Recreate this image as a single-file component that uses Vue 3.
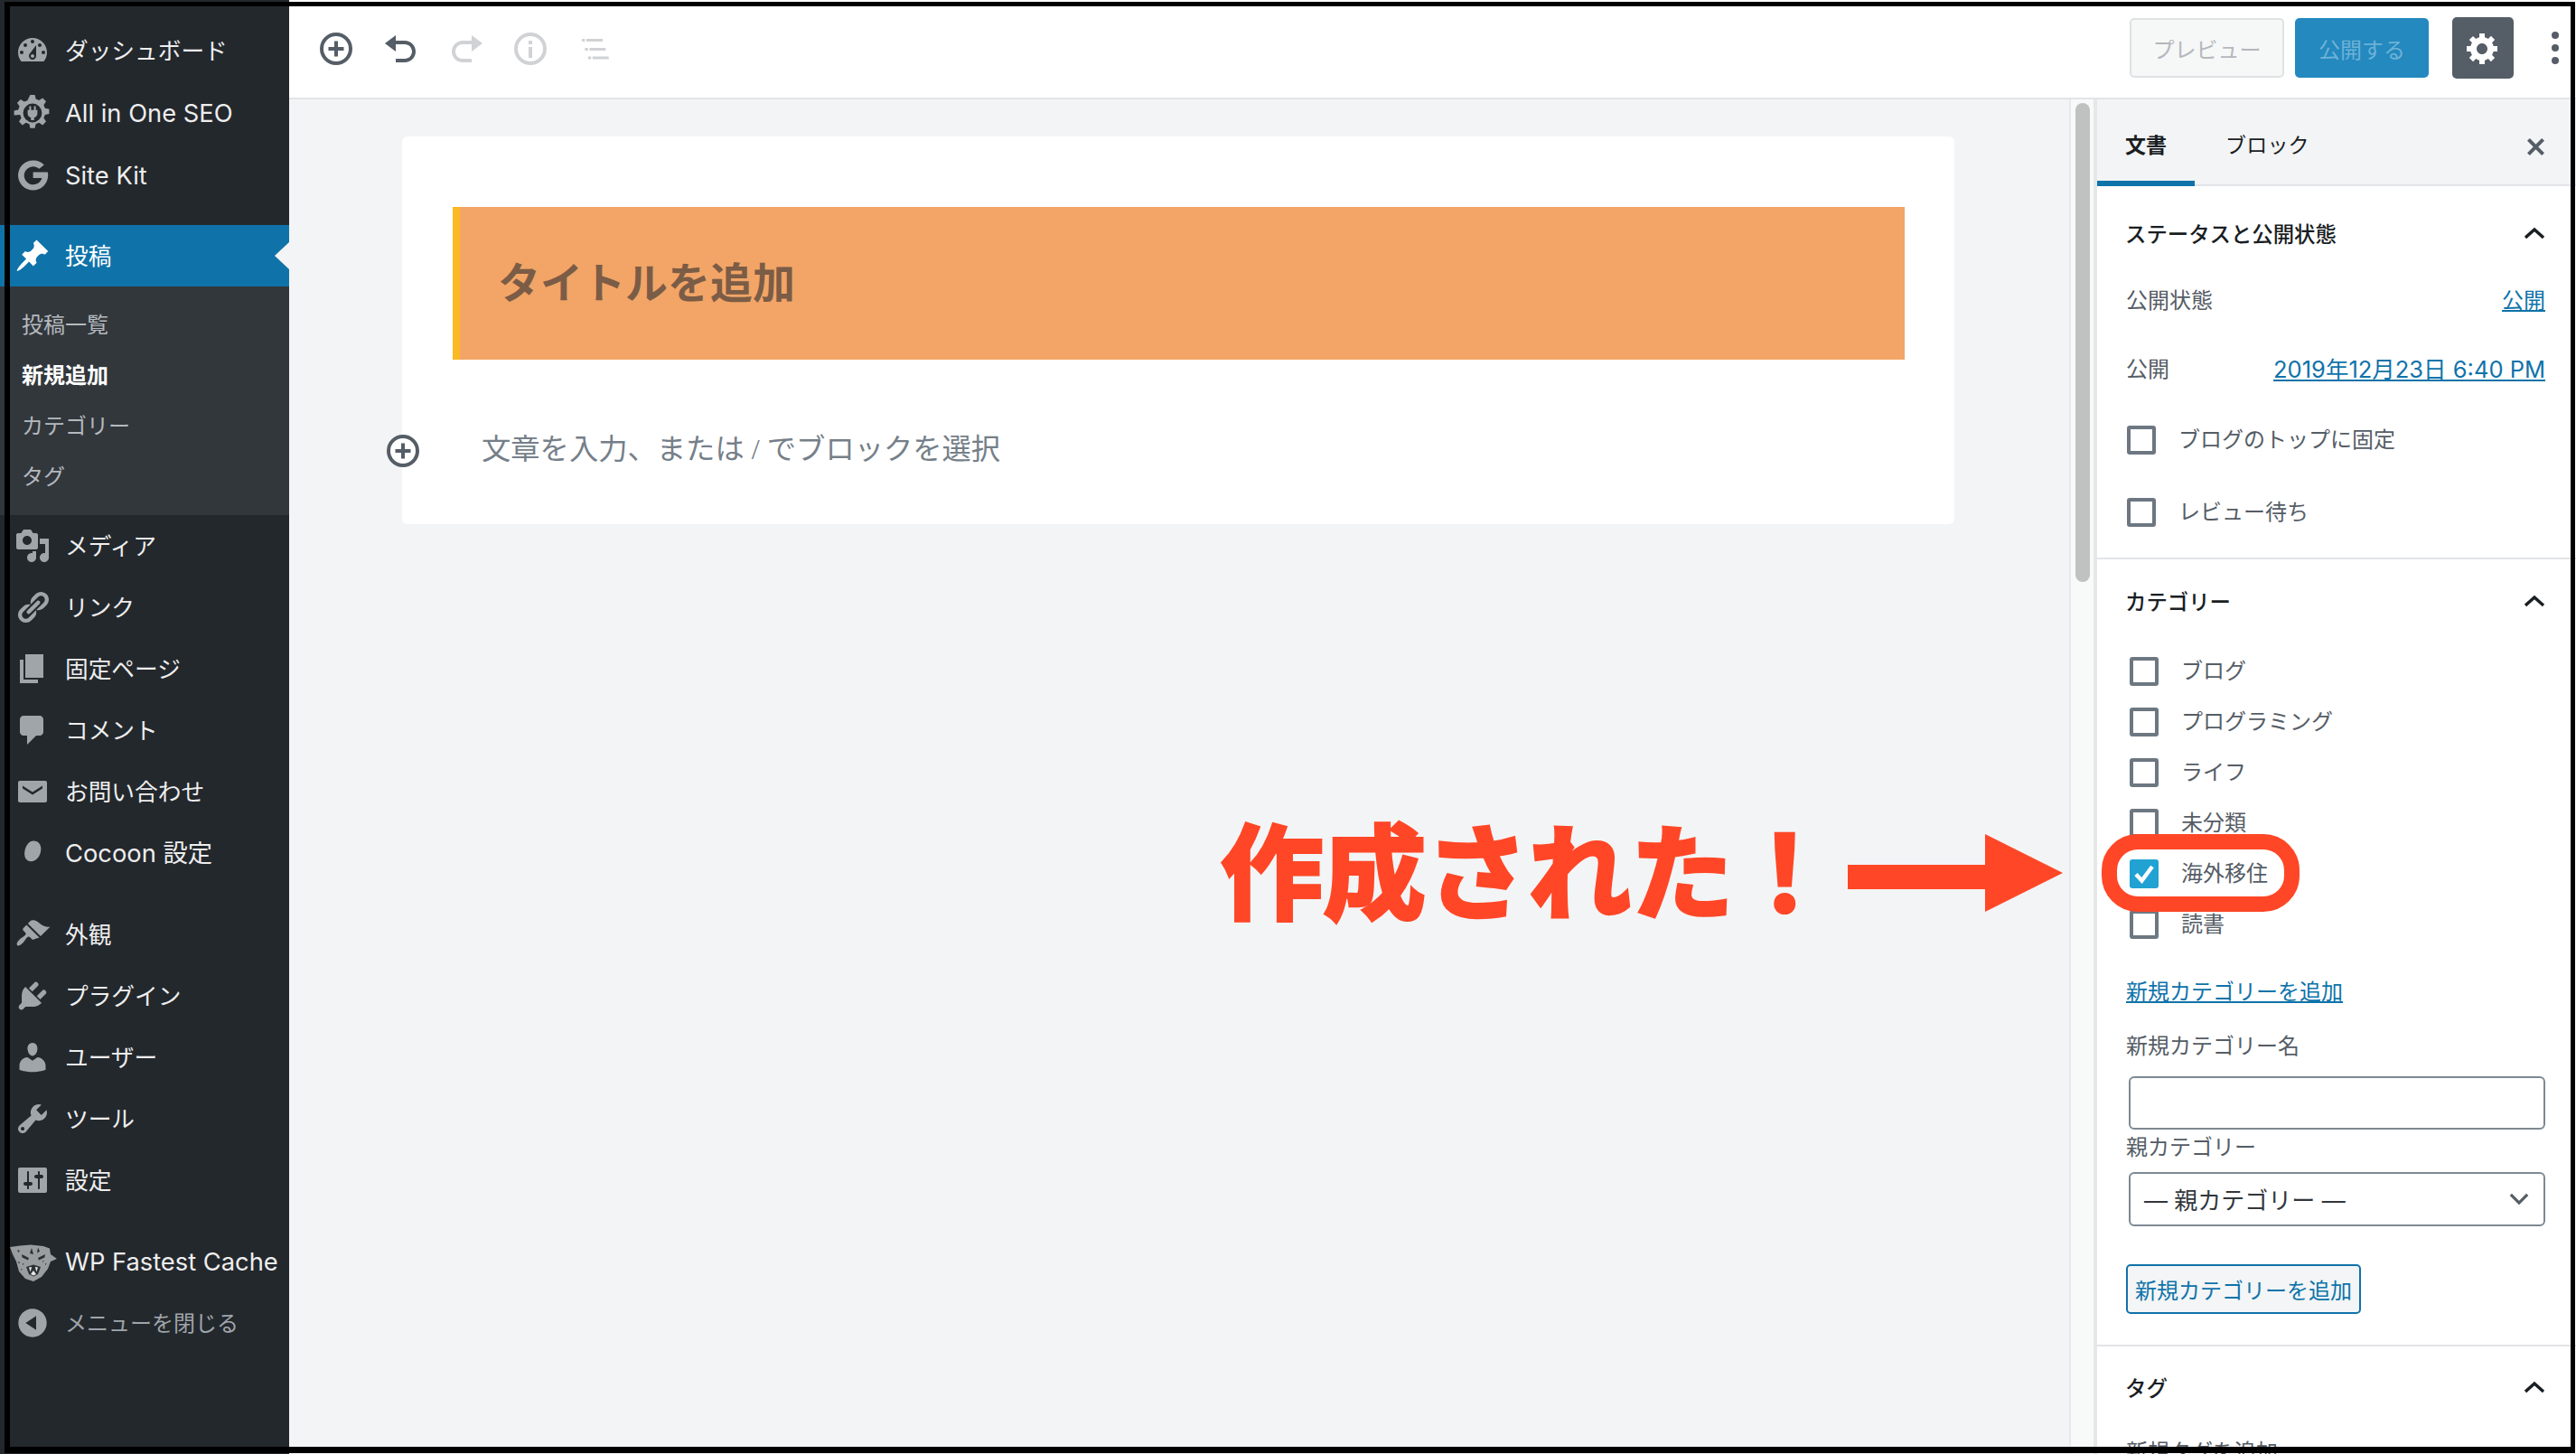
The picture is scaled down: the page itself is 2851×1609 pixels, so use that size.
<template>
  <div class="screen">
    <aside class="adminmenu">
      <template v-for="group in menuGroups" :key="group.id">
        <ul class="menu-group" :class="group.id">
          <li v-for="item in group.items" :key="item.label" class="menu-row" :class="{ current: item.current, muted: item.muted, latin: item.latin }">
            <svg class="menu-icon" viewBox="0 0 20 20">
              <path v-for="(p, i) in item.icon" :key="i" :d="p.d" :fill="p.fill || 'currentColor'" fill-rule="evenodd" />
            </svg>
            <span>{{ item.label }}</span>
            <i v-if="item.current" class="current-arrow"></i>
          </li>
          <li v-if="group.sub" class="submenu">
            <a v-for="s in group.sub" :key="s.label" :class="{ on: s.on }">{{ s.label }}</a>
          </li>
        </ul>
      </template>
    </aside>

    <div class="workspace">
      <header class="topbar">
        <div class="tools">
          <svg class="tool add" viewBox="0 0 36 36"><circle cx="18" cy="18" r="16" /><path d="M18 9.5v17M9.5 18h17" /></svg>
          <svg class="tool-solid undo" viewBox="0 0 20 20"><path :d="undoPath" /></svg>
          <svg class="tool-solid redo" viewBox="0 0 20 20"><path :d="undoPath" /></svg>
          <svg class="tool info" viewBox="0 0 36 36"><circle cx="18" cy="18" r="16" /><path d="M18 16v12" /><path d="M18 9v4" /></svg>
          <svg class="outline" viewBox="0 0 30 24">
            <path d="M0 1h3.4v3H0zM5 1h18v3H5zM3.4 11h3.4v3H3.4zM8.4 11h18v3h-18zM6.8 20.500h3.400v3H6.800zM11.800 20.500h18v3h-18z" />
          </svg>
        </div>
        <div class="actions">
          <button class="btn-preview">プレビュー</button>
          <button class="btn-publish">公開する</button>
          <button class="btn-settings">
            <svg viewBox="0 0 20 20"><path :d="gearPath" fill="#fff" fill-rule="evenodd" /></svg>
          </button>
          <span class="kebab"><i></i><i></i><i></i></span>
        </div>
      </header>

      <div class="body-row">
        <main class="editor">
          <section class="card">
            <div class="post-title">タイトルを追加</div>
            <div class="post-body">
              <svg class="inline-add" viewBox="0 0 36 36"><circle cx="18" cy="18" r="16" /><path d="M18 9.500v17M9.500 18h17" /></svg>
              <span>文章を入力、または / でブロックを選択</span>
            </div>
          </section>
        </main>

        <div class="scroll-track"><div class="scroll-thumb"></div></div>

        <aside class="panel">
          <div class="tabs">
            <span class="tab active">文書</span>
            <span class="tab">ブロック</span>
            <svg class="close" viewBox="0 0 20 20"><path d="M3 3l14 14M17 3L3 17" /></svg>
          </div>

          <section class="group status">
            <div class="group-head">
              <h2>ステータスと公開状態</h2>
              <svg class="chev" viewBox="0 0 24 14"><path d="M2 12L12 3l10 9" /></svg>
            </div>
            <div class="kv first"><span>公開状態</span><a>公開</a></div>
            <div class="kv second"><span>公開</span><a>2019年12月23日 6:40 PM</a></div>
            <label class="check pin"><i class="box"></i>ブログのトップに固定</label>
            <label class="check pending"><i class="box"></i>レビュー待ち</label>
          </section>

          <section class="group cats">
            <div class="group-head">
              <h2>カテゴリー</h2>
              <svg class="chev" viewBox="0 0 24 14"><path d="M2 12L12 3l10 9" /></svg>
            </div>
            <ul class="cat-list">
              <li v-for="c in categories" :key="c.name" class="check">
                <i class="box" :class="{ checked: c.checked }">
                  <svg v-if="c.checked" viewBox="0 0 32 32"><path d="M7 16.500l6.500 7L25 8" /></svg>
                </i>{{ c.name }}
              </li>
            </ul>
            <a class="new-cat">新規カテゴリーを追加</a>
            <div class="field-label name-label">新規カテゴリー名</div>
            <div class="input"></div>
            <div class="field-label parent-label">親カテゴリー</div>
            <div class="select">
              <span>— 親カテゴリー —</span>
              <svg viewBox="0 0 24 14"><path d="M2 2l10 10L22 2" /></svg>
            </div>
            <button class="btn-add">新規カテゴリーを追加</button>
          </section>

          <section class="tags">
            <div class="group-head">
              <h2>タグ</h2>
              <svg class="chev" viewBox="0 0 24 14"><path d="M2 12L12 3l10 9" /></svg>
            </div>
            <div class="field-label tag-label">新規タグを追加</div>
          </section>
        </aside>
      </div>
    </div>

    <!-- annotation pasted on top of the screenshot -->
    <div class="note">作成された！</div>
    <svg class="note-arrow" viewBox="0 0 238 86"><path d="M0 34h152V0l86 43-86 43V61H0z" /></svg>
    <div class="note-ring"></div>
    <div class="frame"></div>
  </div>
</template>

<script setup>
const gearPath = 'M18 12h-2.180c-.170.700-.440 1.350-.810 1.930l1.540 1.540-2.100 2.100-1.540-1.540c-.580.360-1.230.630-1.910.790V19H8v-2.180c-.680-.160-1.330-.430-1.910-.790l-1.540 1.540-2.120-2.120 1.540-1.540c-.360-.580-.630-1.230-.790-1.910H1V9.030h2.170c.160-.700.440-1.350.800-1.940L2.430 5.550l2.100-2.100 1.540 1.540c.580-.370 1.240-.640 1.930-.810V2h3v2.180c.680.160 1.330.430 1.910.790l1.540-1.540 2.120 2.120-1.540 1.540c.360.590.640 1.240.800 1.940H18V12zm-8.500 1.500c1.660 0 3-1.340 3-3s-1.340-3-3-3-3 1.340-3 3 1.340 3 3 3z'
const undoPath = 'M12 5H7V2L1 6.500 7 11V7h5c2.200 0 4 1.800 4 4s-1.800 4-4 4H7v2h5c3.310 0 6-2.690 6-6s-2.690-6-6-6z'

const icons = {
  dashboard: [{ d: 'M3.760 16h12.480c1.100-1.370 1.760-3.110 1.760-5 0-4.420-3.580-8-8-8s-8 3.580-8 8c0 1.890.660 3.630 1.760 5zM10 4c.550 0 1 .450 1 1s-.450 1-1 1-1-.450-1-1 .450-1 1-1zM6 6c.550 0 1 .450 1 1s-.450 1-1 1-1-.450-1-1 .450-1 1-1zm8 0c.550 0 1 .450 1 1s-.450 1-1 1-1-.450-1-1 .450-1 1-1zm-5.370 5.550L12 7v6c0 1.100-.900 2-2 2s-2-.900-2-2c0-.570.240-1.080.630-1.450zM4 10c.550 0 1 .450 1 1s-.450 1-1 1-1-.450-1-1 .450-1 1-1zm12 0c.550 0 1 .450 1 1s-.450 1-1 1-1-.450-1-1 .450-1 1-1zm-5 3c0-.550-.450-1-1-1s-1 .450-1 1 .450 1 1 1 1-.450 1-1z' }],
  seo: [
    { d: 'M8.700 0h2.600l.500 2.300 1.800.700 2-1.300 1.900 1.900-1.300 2 .700 1.800 2.300.500v2.600l-2.300.500-.700 1.800 1.300 2-1.900 1.900-2-1.300-1.800.700-.500 2.300H8.700l-.500-2.300-1.800-.700-2 1.300-1.900-1.900 1.300-2-.700-1.800L-.200 11.300V8.700L2.100 8.200l.700-1.800-1.300-2 1.900-1.900 2 1.300 1.800-.700z' },
    { d: 'M10 4.800a5.200 5.200 0 1 0 0 10.400 5.200 5.200 0 0 0 0-10.400z', fill: '#23282d' },
    { d: 'M8.200 6.200h1v2.200h1.600V6.200h1v2.200h.900v1.900c0 1.200-.700 2-1.800 2.300v1.400H9.100v-1.400c-1.100-.300-1.800-1.100-1.800-2.300V8.400h.900z' }
  ],
  sitekit: [{ d: 'M16.400 4.200A8.300 8.300 0 0 0 10.300 1.700 8.300 8.300 0 1 0 18.600 10c0-.600-.100-1.200-.200-1.800H10.300v3.300h4.900a5 5 0 1 1-1.500-5.100z' }],
  pin: [{ d: 'M10.440 3.020l1.820-1.820 6.360 6.350-1.830 1.820c-1.050-.680-2.480-.570-3.410.360l-.750.750c-.920.930-1.040 2.350-.350 3.410l-1.830 1.820-2.410-2.410-2.800 2.790c-.420.420-3.380 2.710-3.800 2.290s1.860-3.390 2.280-3.810l2.790-2.790L4.100 9.360l1.830-1.820c1.050.690 2.480.570 3.400-.360l.750-.750c.930-.920 1.050-2.350.360-3.410z' }],
  media: [{ d: 'M13 11V4c0-.550-.450-1-1-1h-1.670L9 1H5L3.670 3H2c-.550 0-1 .450-1 1v7c0 .550.450 1 1 1h10c.550 0 1-.450 1-1zM7 4.500c1.380 0 2.500 1.120 2.500 2.500S8.380 9.500 7 9.500 4.500 8.380 4.500 7 5.620 4.500 7 4.500zM14 6h5v10.500c0 1.380-1.120 2.500-2.500 2.500S14 17.880 14 16.500s1.120-2.500 2.500-2.500c.170 0 .340.020.500.050V9h-3V6zm-4 8.050V13h2v3.500c0 1.380-1.120 2.500-2.500 2.500S7 17.880 7 16.500 8.120 14 9.500 14c.170 0 .340.020.500.050z' }],
  links: [{ d: 'M17.740 2.760c1.680 1.690 1.680 4.410 0 6.100l-1.530 1.520c-1.120 1.120-2.700 1.470-4.140 1.090l2.620-2.610.760-.770.760-.760c.840-.840.840-2.200 0-3.040-.840-.850-2.200-.850-3.040 0l-.770.760-3.380 3.380c-.370-1.440-.020-3.020 1.100-4.140l1.520-1.530c1.690-1.680 4.420-1.680 6.100 0zM8.590 13.430l5.340-5.340c.420-.420.420-1.100 0-1.520-.440-.430-1.130-.390-1.530 0l-5.330 5.340c-.420.420-.420 1.100 0 1.520.440.430 1.130.390 1.520 0zm-.760 2.290l4.140-4.150c.380 1.440.030 3.020-1.090 4.140l-1.520 1.530c-1.690 1.680-4.410 1.680-6.100 0-1.680-1.680-1.680-4.420 0-6.100l1.530-1.520c1.120-1.120 2.700-1.470 4.140-1.100l-4.140 4.150c-.850.840-.850 2.200 0 3.050.840.840 2.200.840 3.040 0z' }],
  page: [{ d: 'M6 15V2h10v13H6zm-1 1h8v2H3V5h2v11z' }],
  comment: [{ d: 'M5 2h9c1.100 0 2 .900 2 2v7c0 1.100-.900 2-2 2h-2l-5 5v-5H5c-1.100 0-2-.900-2-2V4c0-1.100.900-2 2-2z' }],
  mail: [{ d: 'M3 4h14c.550 0 1 .450 1 1v10c0 .550-.450 1-1 1H3c-.550 0-1-.450-1-1V5c0-.550.450-1 1-1zm7 6.300L4.500 6.800v1.500l5.500 3.500 5.500-3.500V6.800z' }],
  cocoon: [{ d: 'M10.500 3.300c3 0 4.600 2.400 4.100 5.500-.500 3.400-2.700 5.800-5.400 5.800-2.500 0-3.900-2-3.600-4.800.300-3.500 2.300-6.500 4.900-6.500z' }],
  brush: [{ d: 'M14.480 11.060L7.410 3.990l1.500-1.500c.500-.560 2.300-.470 3.510.320 1.210.800 1.430 1.280 2.910 2.100 1.180.640 2.450 1.260 4.450.850zm-.710.710L6.700 4.700 4.930 6.470c-.390.390-.390 1.020 0 1.410l1.060 1.060c.390.390.390 1.030 0 1.420-.600.600-1.430 1.110-2.210 1.690-.350.260-.700.530-1.010.840-1.430 1.430-1.800 2.500-1.230 3.070s1.640.200 3.070-1.230c.310-.310.580-.660.840-1.010.580-.780 1.090-1.610 1.690-2.210.390-.390 1.030-.390 1.420 0l1.060 1.060c.390.390 1.020.390 1.410 0z' }],
  plugin: [{ d: 'M13.110 4.360L9.870 7.600 8 5.730l3.240-3.240c.350-.340 1.050-.200 1.560.320.520.510.660 1.210.310 1.550zm-8 1.770l.910-1.120 9.010 9.010-1.190.840c-.710.710-2.630 1.160-3.820 1.160H6.140L4.900 17.260c-.590.590-1.540.590-2.120 0-.590-.580-.590-1.530 0-2.120l1.240-1.240v-3.880c0-1.130.400-3.190 1.090-3.890zm7.260 3.970l3.240-3.240c.340-.350 1.040-.210 1.550.310.520.510.660 1.210.310 1.550l-3.240 3.250z' }],
  user: [{ d: 'M10 9.250c-2.270 0-2.730-3.440-2.730-3.440C7 4.020 7.820 2 9.970 2c2.160 0 2.980 2.020 2.710 3.810 0 0-.410 3.440-2.680 3.440zm0 2.570L12.720 10c2.390 0 4.520 2.330 4.520 4.530v2.490s-3.650 1.130-7.240 1.130c-3.650 0-7.240-1.130-7.240-1.130v-2.490c0-2.250 1.940-4.480 4.470-4.480z' }],
  tools: [{ d: 'M16.680 9.770c-1.340 1.340-3.300 1.670-4.950.990l-5.410 6.520c-.990.990-2.590.990-3.580 0s-.990-2.590 0-3.570l6.520-5.420c-.680-1.650-.350-3.610.990-4.950 1.280-1.280 3.120-1.620 4.720-1.060l-2.890 2.890 2.820 2.820 2.860-2.870c.530 1.580.180 3.390-1.080 4.650zM3.810 16.210c.400.390 1.040.390 1.430 0 .400-.400.400-1.040 0-1.430-.390-.400-1.030-.400-1.430 0-.390.390-.390 1.030 0 1.430z' }],
  settings: [{ d: 'M18 16V4c0-.550-.450-1-1-1H3c-.550 0-1 .450-1 1v12c0 .550.450 1 1 1h14c.550 0 1-.450 1-1zM8 11h1c.550 0 1 .450 1 1s-.450 1-1 1H8v1.500c0 .280-.220.500-.500.500s-.500-.220-.500-.500V13H6c-.550 0-1-.450-1-1s.450-1 1-1h1V5.500c0-.280.220-.500.500-.500s.500.220.500.500V11zm5-2h-1c-.550 0-1-.450-1-1s.450-1 1-1h1V5.500c0-.280.220-.500.500-.500s.500.220.500.500V7h1c.550 0 1 .450 1 1s-.450 1-1 1h-1v5.500c0 .280-.220.500-.500.500s-.500-.220-.500-.500V9z' }],
  cheetah: [
    { d: 'M-2.500 2L3 1.200 9 .8l7 .7 3.500 1.200.5 3.300 3.500 2.500-3.500 1.500-1.500 4-3.500 4.500-4.500 2.500-4.500-1.500-3.500-4L1 10-1 6z', fill: '#9a9d9f' },
    { d: 'M4 6l4 2-.500 1.300L4.300 7.800zM17 6l-4 2 .500 1.300 3.200-1.500zM6.500 13l4-1.200 4 1.200-1.500 4-2.500 1.300-2.500-1.300zM9.500 2.500l1 3.500-2-.500zM13 2.200l-.500 3 1.500-.800zM1.500 3.500l1.500.500-.800 1zM2 10l1 .400-.500.900zM4.500 11l.800.300-.500.800zM17 11l.800.200-.600.800zM15.500 9.500l.800.300-.500.700zM3.500 14l.800.300-.500.700z', fill: '#2b3035' },
    { d: 'M8 13.300l.800 2.500.800-2.800zM13 13.300l-.800 2.500-.800-2.800zM9 17l1.500-2 1.500 2-1.500.8z', fill: '#e8e8e8' }
  ],
  collapse: [{ d: 'M10 2.160c4.330 0 7.840 3.510 7.840 7.840s-3.510 7.840-7.840 7.840S2.160 14.330 2.160 10 5.710 2.160 10 2.160zm2 11.720V6.120L6.180 9.970z' }]
}

const menuGroups = [
  { id: 'g-top', items: [
    { label: 'ダッシュボード', icon: icons.dashboard },
    { label: 'All in One SEO', icon: icons.seo, latin: true },
    { label: 'Site Kit', icon: icons.sitekit, latin: true }
  ] },
  { id: 'g-content', items: [
    { label: '投稿', icon: icons.pin, current: true }
  ], sub: [
    { label: '投稿一覧' },
    { label: '新規追加', on: true },
    { label: 'カテゴリー' },
    { label: 'タグ' }
  ] },
  { id: 'g-rest', items: [
    { label: 'メディア', icon: icons.media },
    { label: 'リンク', icon: icons.links },
    { label: '固定ページ', icon: icons.page },
    { label: 'コメント', icon: icons.comment },
    { label: 'お問い合わせ', icon: icons.mail },
    { label: 'Cocoon 設定', icon: icons.cocoon, latin: true }
  ] },
  { id: 'g-admin', items: [
    { label: '外観', icon: icons.brush },
    { label: 'プラグイン', icon: icons.plugin },
    { label: 'ユーザー', icon: icons.user },
    { label: 'ツール', icon: icons.tools },
    { label: '設定', icon: icons.settings }
  ] },
  { id: 'g-end', items: [
    { label: 'WP Fastest Cache', icon: icons.cheetah, latin: true },
    { label: 'メニューを閉じる', icon: icons.collapse, muted: true }
  ] }
]

const categories = [
  { name: 'ブログ' },
  { name: 'プログラミング' },
  { name: 'ライフ' },
  { name: '未分類' },
  { name: '海外移住', checked: true },
  { name: '読書' }
]
</script>

<style>
html, body {
  margin: 0;
  padding: 0;
  background: #fff;
}
</style>

<style scoped>
* {
  box-sizing: border-box;
}

.screen {
  position: relative;
  display: flex;
  width: 2851px;
  height: 1609px;
  overflow: hidden;
  font-family: Inter, "Noto Sans CJK JP", sans-serif;
  color: #555d66;
}

/* admin sidebar */
.adminmenu {
  flex: 0 0 320px;
  background: #23282d;
  padding-top: 21px;
}

.menu-group {
  list-style: none;
  margin: 0 0 22px;
  padding: 0;
}

.g-top {
  margin-bottom: 21px;
}

.g-content {
  margin-bottom: 0;
}

.g-top .menu-row {
  height: 69px;
}

.g-end {
  margin-bottom: 0;
}

.menu-row {
  position: relative;
  display: flex;
  align-items: center;
  gap: 16px;
  height: 68px;
  padding-left: 16px;
  font-size: 25.700px;
  line-height: 34px;
  color: #eee;
  white-space: nowrap;
}

.menu-row.latin {
  font-size: 27.300px;
}

.menu-row span {
  padding-top: 2px;
}

.menu-icon {
  flex: 0 0 40px;
  width: 40px;
  height: 40px;
  color: #a0a5aa;
  overflow: visible;
}

.menu-row.current {
  background: #0f73a9;
  color: #fff;
}

.menu-row.current .menu-icon {
  color: #fff;
}

.menu-row.muted {
  color: #a0a5aa;
  font-size: 24px;
}

.current-arrow {
  position: absolute;
  right: 0;
  top: 19px;
  border: 15px solid transparent;
  border-left: 0;
  border-right: 16px solid #f3f4f5;
}

.submenu {
  display: flex;
  flex-direction: column;
  height: 253px;
  padding: 15px 0 0 24px;
  background: #32373c;
  margin-bottom: 0;
}

.submenu a {
  height: 56px;
  font-size: 24px;
  line-height: 56px;
  color: #b4b9be;
}

.submenu a.on {
  color: #fff;
  font-weight: 700;
}

/* editor column */
.workspace {
  flex: 1;
  display: flex;
  flex-direction: column;
  min-width: 0;
}

.topbar {
  flex: 0 0 110px;
  display: flex;
  justify-content: space-between;
  align-items: center;
  background: #fff;
  border-bottom: 2px solid #e2e4e7;
  padding: 0 3px 2px 34px;
}

.tools {
  display: flex;
  align-items: center;
  padding-top: 2px;
}

.tool {
  width: 36px;
  height: 36px;
  fill: none;
  stroke-width: 4;
}

.tool.add {
  stroke: #555d66;
}

.tool.info {
  stroke: #d0d2d5;
  margin-left: 33px;
}

.tool-solid {
  width: 40px;
  height: 40px;
  margin-top: 2px;
}

.tool-solid.undo {
  fill: #555d66;
  margin-left: 34px;
}

.tool-solid.redo {
  fill: #d0d2d5;
  transform: scaleX(-1);
  margin-left: 32px;
}

.outline {
  width: 30px;
  height: 24px;
  margin-left: 39px;
  fill: #d0d2d5;
}

.actions {
  display: flex;
  align-items: center;
}

.actions button {
  font-family: inherit;
  padding: 0;
  border-radius: 5px;
}

.btn-preview {
  width: 171px;
  height: 66px;
  background: #f6f7f7;
  border: 2px solid #dfe1e3;
  color: #b3b8bc;
  font-size: 24px;
}

.btn-publish {
  width: 148px;
  height: 66px;
  margin-left: 12px;
  background: #2389bf;
  border: 0;
  color: #6eb2d6;
  font-size: 24px;
}

.btn-settings {
  display: flex;
  align-items: center;
  justify-content: center;
  width: 68px;
  height: 68px;
  margin-left: 26px;
  background: #555d66;
  border: 0;
}

.btn-settings svg {
  width: 40px;
  height: 40px;
}

.kebab {
  display: flex;
  flex-direction: column;
  gap: 6px;
  width: 8px;
  margin: 0 16px 0 42px;
}

.kebab i {
  width: 8px;
  height: 8px;
  border-radius: 50%;
  background: #555d66;
}

.body-row {
  flex: 1;
  display: flex;
  min-height: 0;
}

.editor {
  flex: 1;
  min-width: 0;
  background: #f3f4f5;
  padding: 41px 127px 0 125px;
}

.card {
  height: 429px;
  background: #fff;
  border-radius: 6px;
  padding: 78px 55px 0 56px;
}

.post-title {
  height: 169px;
  padding-left: 42px;
  background: #f2a566;
  border-left: 8px solid #fbb924;
  font-size: 47px;
  font-weight: 700;
  line-height: 167px;
  color: #7b5c46;
}

.post-body {
  position: relative;
  padding: 76px 0 0 32px;
  font-family: "Liberation Serif", "Noto Sans CJK JP", serif;
  font-size: 32.300px;
  line-height: 46px;
  color: #767f89;
}

.inline-add {
  position: absolute;
  left: -73px;
  top: 83px;
  width: 36px;
  height: 36px;
  fill: #fff;
  stroke: #555d66;
  stroke-width: 4;
}

.scroll-track {
  flex: 0 0 27px;
  border-left: 2px solid #e8e9eb;
  background: #f8f9f9;
  padding: 4px 4px 0 5px;
}

.scroll-thumb {
  height: 530px;
  border-radius: 8px;
  background: #c1c1c1;
}

/* settings panel */
.panel {
  flex: 0 0 531px;
  border-left: 4px solid #e6e7e9;
  background: #fff;
  min-height: 0;
}

.tabs {
  position: relative;
  display: flex;
  height: 96px;
  background: #f3f4f5;
  border-bottom: 2px solid #e2e4e7;
  font-size: 23px;
  color: #191e23;
}

.tab {
  padding-top: 34px;
  line-height: 34px;
}

.tab.active {
  width: 108px;
  text-align: center;
  font-weight: 700;
  border-bottom: 6px solid #0f73a9;
  height: 96px;
}

.tab + .tab {
  margin-left: 34px;
  letter-spacing: .2px;
}

.close {
  position: absolute;
  top: 41px;
  right: 33px;
  width: 23px;
  height: 23px;
  fill: none;
  stroke: #555d66;
  stroke-width: 3.500;
}

.group {
  border-bottom: 2px solid #e2e4e7;
  padding: 0 34px 0 32px;
}

.status {
  height: 413px;
}

.group-head {
  display: flex;
  justify-content: space-between;
  align-items: center;
  height: 104px;
}

.group-head h2 {
  margin: 0 0 1px -1px;
  font-size: 23.400px;
  font-weight: 500;
  color: #191e23;
}

.chev {
  width: 24px;
  height: 14px;
  fill: none;
  stroke: #191e23;
  stroke-width: 3.500;
}

.kv {
  display: flex;
  justify-content: space-between;
  align-items: center;
  height: 44px;
  padding-bottom: 3px;
  font-size: 24px;
}

.kv a {
  color: #0f73a9;
  text-decoration: underline;
}

.kv.second {
  margin-top: 32px;
}

.kv.second a {
  font-size: 25.500px;
}

.check {
  display: flex;
  align-items: flex-start;
  height: 32px;
  font-size: 24px;
  line-height: 31px;
  color: #555d66;
}

.box {
  flex: 0 0 32px;
  width: 32px;
  height: 32px;
  margin-right: 25px;
  border: 4px solid #6c7781;
  border-radius: 3px;
  background: #fff;
}

.box.checked {
  border: 0;
  background: #21a2d3;
}

.box svg {
  display: block;
  fill: none;
  stroke: #fff;
  stroke-width: 4.500;
}

.pin {
  margin: 41px 0 0 1px;
}

.pending {
  margin: 48px 0 0 1px;
}

.cats {
  height: 871px;
}

.cats .group-head {
  height: 92px;
}

.cat-list {
  list-style: none;
  margin: 16px 0 0;
  padding: 0 0 0 4px;
  display: flex;
  flex-direction: column;
  gap: 24px;
}

.new-cat {
  display: block;
  margin-top: 42px;
  font-size: 24px;
  line-height: 34px;
  color: #0f73a9;
  text-decoration: underline;
}

.field-label {
  font-size: 24px;
  line-height: 34px;
  color: #555d66;
}

.name-label {
  margin-top: 26px;
}

.input {
  width: 461px;
  height: 59px;
  margin: 16px 0 0 3px;
  border: 2px solid #7e8993;
  border-radius: 6px;
}

.parent-label {
  margin-top: 3px;
}

.select {
  display: flex;
  align-items: center;
  justify-content: space-between;
  width: 461px;
  height: 60px;
  margin: 10px 0 0 3px;
  padding: 0 16px 2px 15px;
  border: 2px solid #7e8993;
  border-radius: 6px;
  font-size: 26px;
  color: #32373c;
}

.select svg {
  width: 22px;
  height: 13px;
  fill: none;
  stroke: #555d66;
  stroke-width: 3.500;
}

.btn-add {
  display: block;
  width: 260px;
  height: 55px;
  margin-top: 42px;
  padding: 0;
  background: #f3f5f6;
  border: 2px solid #0f73a9;
  border-radius: 5px;
  font-family: inherit;
  font-size: 24px;
  color: #0f73a9;
  white-space: nowrap;
}

.tags {
  padding: 0 34px 0 32px;
}

.tags .group-head {
  height: 90px;
}

.tag-label {
  margin-top: 10px;
}

/* annotation */
.note {
  position: absolute;
  left: 1351px;
  top: 886px;
  font-family: "Noto Sans CJK JP", sans-serif;
  font-size: 113.500px;
  font-weight: 700;
  line-height: 146px;
  color: #ff4626;
  -webkit-text-stroke: 4px #ff4626;
  white-space: nowrap;
}

.note-arrow {
  position: absolute;
  left: 2045px;
  top: 923px;
  width: 238px;
  height: 86px;
  fill: #ff4626;
}

.note-ring {
  position: absolute;
  left: 2326px;
  top: 923px;
  width: 219px;
  height: 86px;
  border: 17px solid #ff4626;
  border-radius: 40px;
}

.frame {
  position: absolute;
  left: 5px;
  top: 2px;
  width: 2845px;
  height: 1606px;
  border-style: solid;
  border-color: #000;
  border-width: 5px 5px 7px 6px;
}
</style>
